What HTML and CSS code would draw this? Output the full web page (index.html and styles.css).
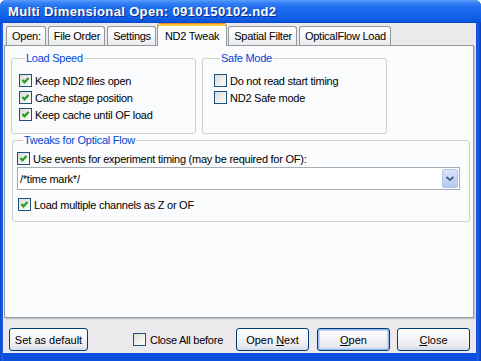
FILE: index.html
```html
<!DOCTYPE html>
<html lang="en">

<head>
    <meta charset="UTF-8">
    <title>Multi Dimensional Open</title>
    <link rel="stylesheet" href="styles.css">
</head>

<body>
    <div class="window">
        <div class="title-bar">Multi Dimensional Open: 0910150102.nd2</div>
        <div class="client">
            <div class="tabs">
                <div class="tab">Open:</div>
                <div class="tab">File Order</div>
                <div class="tab">Settings</div>
                <div class="tab active">ND2 Tweak</div>
                <div class="tab">Spatial Filter</div>
                <div class="tab">OpticalFlow Load</div>
            </div>
            <div class="tab-page">
                <div class="group-row">
                    <fieldset class="group load-speed">
                        <legend>Load Speed</legend>
                        <label class="check"><span class="box on"><svg viewBox="0 0 11 11"><polyline points="2.5,5 4.5,7.3 8.5,3" /></svg></span>Keep ND2 files open</label>
                        <label class="check"><span class="box on"><svg viewBox="0 0 11 11"><polyline points="2.5,5 4.5,7.3 8.5,3" /></svg></span>Cache stage position</label>
                        <label class="check"><span class="box on"><svg viewBox="0 0 11 11"><polyline points="2.5,5 4.5,7.3 8.5,3" /></svg></span>Keep cache until OF load</label>
                    </fieldset>
                    <fieldset class="group safe-mode">
                        <legend>Safe Mode</legend>
                        <label class="check"><span class="box"></span>Do not read start timing</label>
                        <label class="check"><span class="box"></span>ND2 Safe mode</label>
                    </fieldset>
                </div>
                <fieldset class="group tweaks">
                    <legend>Tweaks for Optical Flow</legend>
                    <label class="check"><span class="box on"><svg viewBox="0 0 11 11"><polyline points="2.5,5 4.5,7.3 8.5,3" /></svg></span>Use events for experiment timing (may be required for OF):</label>
                    <div class="combo">
                        <span class="combo-text">/*time mark*/</span>
                        <span class="combo-btn"><svg viewBox="0 0 14 17"><polyline points="3.5,7 7,10 10.5,7" /></svg></span>
                    </div>
                    <label class="check second"><span class="box on"><svg viewBox="0 0 11 11"><polyline points="2.5,5 4.5,7.3 8.5,3" /></svg></span>Load multiple channels as Z or OF</label>
                </fieldset>
            </div>
            <div class="footer">
                <button class="btn wide">Set as default</button>
                <label class="check close-all"><span class="box"></span>Close All before</label>
                <button class="btn">Open <u>N</u>ext</button>
                <button class="btn default"><u>O</u>pen</button>
                <button class="btn"><u>C</u>lose</button>
            </div>
        </div>
    </div>
</body>

</html>
```

FILE: styles.css
```css
:root {
    --frame-blue: #0b4fdc;
    --face: #ece9ec;
    --page: #fafbfd;
    --tab-border: #919b9c;
    --group-border: #d0d0c8;
    --legend: #0046d5;
    --check-border: #1c5180;
    --check-green: #21a121;
}

* {
    box-sizing: border-box;
}

body {
    margin: 0;
    font-family: "Liberation Sans", Arial, sans-serif;
    font-size: 11px;
    letter-spacing: -0.25px;
    color: #000;
}

.window {
    width: 481px;
    height: 361px;
    display: flex;
    flex-direction: column;
    background: linear-gradient(90deg, #0a3fc4, #1a62ea 2px, var(--frame-blue) 4px, var(--frame-blue) calc(100% - 5px), #1a5ee6 calc(100% - 3px), #0a3cb8);
    border-radius: 6px 6px 0 0;
    overflow: hidden;
}

.title-bar {
    flex: none;
    height: 23px;
    padding-left: 8px;
    display: flex;
    align-items: center;
    color: #fff;
    font-size: 13px;
    font-weight: bold;
    letter-spacing: 0.35px;
    text-shadow: 1px 1px 0 #0b2b8a;
    background: linear-gradient(#5a9ffb 0, #3580f4 3px, #1e6cee 8px, #1262ea 16px, #0c58e0 21px, #0846c8 23px);
}

.client {
    flex: 1;
    margin: 0 5px 8px 3px;
    padding-left: 1px;
    background: var(--face);
    display: flex;
    flex-direction: column;
}

/* tabs */

.tabs {
    flex: none;
    height: 22px;
    padding-left: 2px;
    display: flex;
    align-items: flex-end;
    position: relative;
    z-index: 1;
}

.tab {
    height: 19px;
    padding: 0 4px 0 5px;
    margin-right: 2px;
    display: flex;
    align-items: center;
    border: 1px solid var(--tab-border);
    border-bottom: none;
    border-radius: 3px 3px 0 0;
    background: linear-gradient(#ffffff, #f7f7f9 50%, #ebebee);
}

.tab.active {
    height: 23px;
    margin: 0 1px -1px -1px;
    padding: 1px 7px 0 7px;
    border-top: 1px solid #e68b2c;
    box-shadow: inset 0 2px 0 #ffc83c;
    background: var(--page);
}

.tab-page {
    flex: none;
    height: 273px;
    margin-right: 2px;
    padding: 6px 0 0 6px;
    border: 1px solid var(--tab-border);
    background: var(--page);
    box-shadow: 1px 1px 0 #c9c9cf, 2px 2px 0 #dedee2;
}

/* group boxes */

.group-row {
    display: flex;
    gap: 6px;
}

.group {
    margin: 0;
    padding: 0;
    min-width: 0;
    border: 1px solid var(--group-border);
    border-radius: 3px;
}

.group legend {
    margin-left: 6px;
    padding: 0 1px;
    line-height: 13px;
    color: var(--legend);
}

.load-speed,
.safe-mode {
    width: 185px;
    height: 82px;
    padding: 7px 0 0 7px;
}

.safe-mode {
    padding-left: 11px;
}

.tweaks {
    width: 458px;
    height: 88px;
    margin-left: 1px;
    padding: 3px 0 0 4px;
}

/* checkboxes */

.check {
    height: 17px;
    display: flex;
    align-items: center;
    gap: 3px;
    white-space: nowrap;
}

.box {
    flex: none;
    width: 13px;
    height: 13px;
    border: 1px solid var(--check-border);
    background: linear-gradient(135deg, #dcdcd7, #f4f4f0 70%, #ffffff);
}

.box svg {
    display: block;
    width: 11px;
    height: 11px;
}

.box polyline {
    fill: none;
    stroke: var(--check-green);
    stroke-width: 2.2;
}

.check.second {
    margin: 6px 0 0 1px;
}

/* combo box */

.combo {
    width: 443px;
    height: 23px;
    padding: 1px 1px 1px 2px;
    display: flex;
    align-items: center;
    border: 1px solid #a5acb2;
    background: #fff;
}

.combo-text {
    flex: 1;
}

.combo-btn {
    width: 16px;
    height: 19px;
    border: 1px solid #b1c4ec;
    border-radius: 2px;
    background: linear-gradient(#dbe5fb, #c2d3f7 60%, #b4c8f3);
}

.combo-btn svg {
    display: block;
    width: 14px;
    height: 17px;
}

.combo-btn polyline {
    fill: none;
    stroke: #4d6185;
    stroke-width: 2;
}

/* bottom buttons */

.footer {
    display: flex;
    align-items: center;
    padding: 10px 6px 0 5px;
}

.btn {
    width: 73px;
    height: 23px;
    padding: 0;
    font: inherit;
    color: #000;
    border: 1px solid #003c74;
    border-radius: 3px;
    background: linear-gradient(#ffffff, #f5f5f7 45%, #e9eaf0 80%, #d9dbe5);
}

.btn.wide {
    width: 79px;
}

.btn.default {
    margin: 0 7px 0 8px;
    box-shadow: inset 0 0 0 1px #9ab9ec, inset 0 0 0 2px #c2d6f7;
}

.close-all {
    margin: 0 13px 0 auto;
    gap: 4px;
}
```
